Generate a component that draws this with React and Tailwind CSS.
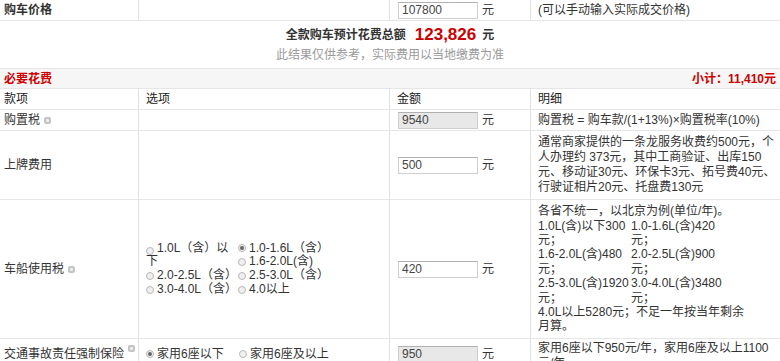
import React from 'react'

const font = { fontFamily: '"Liberation Sans", "Noto Sans CJK SC", sans-serif' }

function Info() {
  return (
    <svg className="ml-[4px] inline-block align-middle" width="7" height="7" viewBox="0 0 7 7">
      <rect x="0" y="0" width="7" height="7" rx="2" fill="#c4c4c4" />
      <rect x="2" y="2" width="3" height="3" rx="1" fill="#eeeeee" />
    </svg>
  )
}

function Radio({ checked }) {
  return (
    <span className="mr-[3px] inline-flex h-[8px] w-[8px] shrink-0 items-center justify-center rounded-full border border-[#b8b8b8] bg-[#f0f0f0]">
      {checked && <span className="h-[4px] w-[4px] rounded-full bg-[#666]" />}
    </span>
  )
}

function Amount({ value, disabled }) {
  return (
    <div className="flex items-center pl-[8px]">
      <div
        className={
          'flex h-[17px] w-[80px] items-center border border-[#cfcfcf] border-t-[#b0b0b0] pl-[3px] text-[12px] text-[#444] ' +
          (disabled ? 'bg-[#e8e8e8]' : 'bg-white')
        }
      >
        {value}
      </div>
      <span className="ml-[4px] text-[12px] text-[#333]">元</span>
    </div>
  )
}

export default function App() {
  const cell = 'border-r border-[#e2e2e2] flex items-center'
  return (
    <div className="h-[361px] w-[780px] overflow-hidden bg-white text-[12px] text-[#333]" style={font}>
      {/* 购车价格 */}
      <div className="grid h-[21px] grid-cols-[139px_251px_141px_1fr] border-b border-[#e6e6e6]">
        <div className={cell + ' pl-[4px] font-bold'}>购车价格</div>
        <div className={cell} />
        <div className={cell}>
          <Amount value="107800" />
        </div>
        <div className="flex items-center pl-[7px]">(可以手动输入实际成交价格)</div>
      </div>

      {/* 总额 */}
      <div className="flex h-[48px] flex-col items-center justify-center border-b border-[#e6e6e6] pb-[1px]">
        <div className="flex h-[22px] items-center">
          <span className="font-bold">全款购车预计花费总额</span>
          <span className="ml-[9px] text-[17px] font-bold text-[#c00]">123,826</span>
          <span className="ml-[6px] font-bold">元</span>
        </div>
        <div className="text-[#9a9a9a]">此结果仅供参考，实际费用以当地缴费为准</div>
      </div>

      {/* 必要花费 */}
      <div className="flex h-[20px] items-center justify-between border-b border-[#e6e6e6] bg-[#f6f6f6] px-[4px] font-bold text-[#c00]">
        <span>必要花费</span>
        <span>小计：11,410元</span>
      </div>

      {/* 表头 */}
      <div className="grid h-[21px] grid-cols-[139px_251px_141px_1fr] border-b border-[#e6e6e6] text-[#222]">
        <div className={cell + ' pl-[4px]'}>款项</div>
        <div className={cell + ' pl-[7px]'}>选项</div>
        <div className={cell + ' pl-[7px]'}>金额</div>
        <div className="flex items-center pl-[7px]">明细</div>
      </div>

      {/* 购置税 */}
      <div className="grid h-[21px] grid-cols-[139px_251px_141px_1fr] border-b border-[#e6e6e6]">
        <div className={cell + ' pl-[4px]'}>
          购置税<Info />
        </div>
        <div className={cell} />
        <div className={cell}>
          <Amount value="9540" disabled />
        </div>
        <div className="flex items-center pl-[7px]">购置税 = 购车款/(1+13%)×购置税率(10%)</div>
      </div>

      {/* 上牌费用 */}
      <div className="grid h-[69px] grid-cols-[139px_251px_141px_1fr] border-b border-[#e6e6e6]">
        <div className={cell + ' pl-[4px]'}>上牌费用</div>
        <div className={cell} />
        <div className={cell}>
          <Amount value="500" />
        </div>
        <div className="flex flex-col justify-center whitespace-nowrap pl-[7px] leading-[15px]">
          <span>通常商家提供的一条龙服务收费约500元，个</span>
          <span>人办理约 373元，其中工商验证、出库150</span>
          <span>元、移动证30元、环保卡3元、拓号费40元、</span>
          <span>行驶证相片20元、托盘费130元</span>
        </div>
      </div>

      {/* 车船使用税 */}
      <div className="grid h-[139px] grid-cols-[139px_251px_141px_1fr] border-b border-[#e6e6e6]">
        <div className={cell + ' pl-[4px]'}>
          车船使用税<Info />
        </div>
        <div className={cell + ' pl-[7px]'}>
          <div className="grid grid-cols-[92px_92px] grid-rows-[13.7px_13.7px_13.7px_13.7px] leading-[13.7px] whitespace-nowrap">
            <div className="row-span-2 flex items-start">
              <span className="mt-[3px]"><Radio /></span>
              <span>
                1.0L（含）以
                <br />
                <span className="-ml-[11px]">下</span>
              </span>
            </div>
            <div className="flex items-center"><Radio checked />1.0-1.6L（含）</div>
            <div className="col-start-2 flex items-center"><Radio />1.6-2.0L(含)</div>
            <div className="flex items-center"><Radio />2.0-2.5L（含）</div>
            <div className="flex items-center"><Radio />2.5-3.0L（含）</div>
            <div className="flex items-center"><Radio />3.0-4.0L（含）</div>
            <div className="flex items-center"><Radio />4.0以上</div>
          </div>
        </div>
        <div className={cell}>
          <Amount value="420" />
        </div>
        <div className="flex flex-col justify-center whitespace-nowrap pl-[7px] leading-[14.4px]">
          <span>各省不统一，以北京为例(单位/年)。</span>
          <div className="grid grid-cols-[93px_1fr]">
            <span>1.0L(含)以下300</span>
            <span>1.0-1.6L(含)420</span>
            <span>元；</span>
            <span>元；</span>
            <span>1.6-2.0L(含)480</span>
            <span>2.0-2.5L(含)900</span>
            <span>元；</span>
            <span>元；</span>
            <span>2.5-3.0L(含)1920</span>
            <span>3.0-4.0L(含)3480</span>
            <span>元；</span>
            <span>元；</span>
          </div>
          <span>4.0L以上5280元；不足一年按当年剩余</span>
          <span>月算。</span>
        </div>
      </div>

      {/* 交通事故责任强制保险 */}
      <div className="grid h-[40px] grid-cols-[139px_251px_141px_1fr]">
        <div className={cell + ' items-start pl-[4px] pt-[6px]'}>
          交通事故责任强制保险<Info />
        </div>
        <div className={cell + ' items-start pl-[7px] pt-[6px]'}>
          <span className="flex w-[93px] items-center"><Radio checked />家用6座以下</span>
          <span className="flex items-center"><Radio />家用6座及以上</span>
        </div>
        <div className={cell + ' items-start pt-[6px]'}>
          <Amount value="950" disabled />
        </div>
        <div className="flex flex-col whitespace-nowrap pl-[7px] pt-[2px] leading-[15px]">
          <span>家用6座以下950元/年，家用6座及以上1100</span>
          <span>元/年</span>
        </div>
      </div>
    </div>
  )
}
